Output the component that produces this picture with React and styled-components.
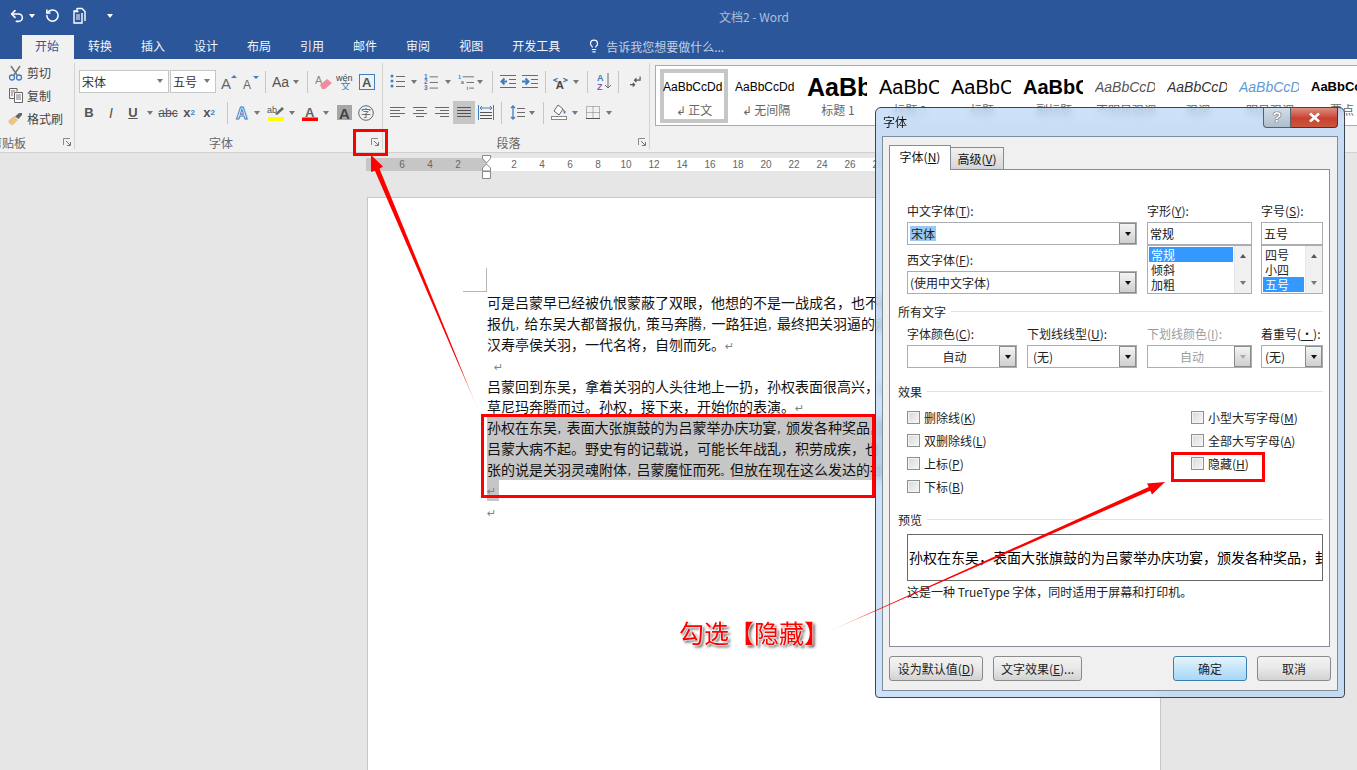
import React from "react";
import styled, { createGlobalStyle } from "styled-components";
import { Undo2, RotateCcw, Lightbulb } from "lucide-react";

const UI = `"Noto Sans CJK SC", "Liberation Sans", sans-serif`;
const LATIN = `"Liberation Sans", "Noto Sans CJK SC", sans-serif`;
const GRAY = "#6a6a6a";
const BLUE = "#3f7fbf";

const Global = createGlobalStyle`
  html, body { margin: 0; padding: 0; overflow: hidden; }
  body { font-family: ${UI}; font-size: 12px; color: #111; }
  * { box-sizing: border-box; }
`;

const Shell = styled.div`
  position: relative;
  width: 1357px;
  height: 770px;
  overflow: hidden;
  display: flex;
  flex-direction: column;
  background: #e6e6e6;
`;

/* title bar and tabs */
const TitleBar = styled.div`
  height: 33px;
  background: #2b579a;
  display: flex;
  align-items: center;
  color: #fff;
`;
const Quick = styled.div`
  width: 719px;
  display: flex;
  align-items: center;
  padding: 0 0 2px 9px;
`;
const QuickGap = styled.span`
  display: inline-flex;
  margin-left: ${(p) => p.$ml || 0}px;
`;
const DocTitle = styled.div`
  font-size: 12px;
  color: #aebfd9;
  white-space: nowrap;
`;
const TabBar = styled.div`
  height: 26px;
  background: #2b579a;
  display: flex;
  align-items: flex-end;
  padding-left: 22px;
`;
const Tab = styled.div`
  height: 24px;
  padding: 0 15px 0 13px;
  margin-right: 1px;
  line-height: 22px;
  font-size: 12px;
  color: ${(p) => (p.$on ? "#2b579a" : "#f2f5fa")};
  background: ${(p) => (p.$on ? "#f1f1f1" : "transparent")};
`;
const TellMe = styled.div`
  height: 24px;
  margin-left: 11px;
  padding-bottom: 2px;
  display: flex;
  align-items: center;
  gap: 5px;
  color: #c3cfe3;
  font-size: 12px;
  svg { color: #fff; }
`;

/* ribbon */
const Ribbon = styled.div`
  height: 94px;
  background: #f1f1f1;
  border-bottom: 1px solid #d0d0d0;
  display: flex;
  overflow: hidden;
`;
const Group = styled.div`
  width: ${(p) => p.$w}px;
  flex: none;
  display: flex;
  flex-direction: column;
  padding-top: 11px;
  position: relative;
  &::after {
    content: "";
    position: absolute;
    right: 0;
    top: 4px;
    bottom: 3px;
    width: 1px;
    background: #d4d4d4;
  }
`;
const Row = styled.div`
  display: flex;
  align-items: center;
  height: 23px;
  margin-bottom: 8px;
  padding-left: ${(p) => p.$pl || 0}px;
`;
const GroupFoot = styled.div`
  margin-top: auto;
  margin-bottom: 1px;
  height: 18px;
  display: flex;
  align-items: center;
  color: #666;
  font-size: 12px;
`;
const GroupName = styled.div`
  flex: 1;
  text-align: center;
`;
const ClippedName = styled.div`
  flex: 1;
  margin-left: -10px;
  white-space: nowrap;
`;
const Launcher = styled.div`
  width: 16px;
  display: flex;
  justify-content: center;
`;
const ClipRows = styled.div`
  height: 69px;
  margin-top: -9px;
  display: flex;
  flex-direction: column;
`;
const ClipItem = styled.div`
  height: 23px;
  display: flex;
  align-items: center;
  color: #444;
  font-size: 12px;
`;
const ClipIcon = styled.span`
  width: 27px;
  display: flex;
  justify-content: center;
  padding-left: 4px;
`;
const Select = styled.div`
  width: ${(p) => p.$w}px;
  height: 23px;
  margin-left: ${(p) => p.$ml || 0}px;
  border: 1px solid #c6c6c6;
  background: #fff;
  display: flex;
  align-items: center;
  justify-content: space-between;
  padding: 0 5px 1px 2px;
  color: #333;
  font-size: 12px;
`;
const Tool = styled.span`
  width: ${(p) => p.$w}px;
  height: ${(p) => (p.$on ? 23 : 20)}px;
  margin-left: ${(p) => p.$ml || 0}px;
  flex: none;
  display: flex;
  align-items: center;
  justify-content: center;
  background: ${(p) => (p.$on ? "#c6c6c6" : "transparent")};
  color: ${(p) => p.$c || "#555"};
  font-family: ${LATIN};
  font-size: ${(p) => p.$fs || 13}px;
  font-weight: ${(p) => p.$fw || 400};
  font-style: ${(p) => p.$it || "normal"};
  white-space: nowrap;
`;
const Caret = styled.i`
  display: block;
  width: 0;
  height: 0;
  border-left: 3.5px solid transparent;
  border-right: 3.5px solid transparent;
  border-top: 4px solid ${(p) => p.$c || "#777"};
`;
const Sep = styled.i`
  display: block;
  flex: none;
  width: 1px;
  height: 22px;
  margin-left: ${(p) => p.$ml || 0}px;
  background: #c6c6c6;
`;
const Gallery = styled.div`
  flex: 1;
  height: 61px;
  margin: 6px 0 0 5px;
  background: #fff;
  border: 1px solid #ababab;
  border-right: 0;
  padding: 3px 0 0 4px;
  display: flex;
  overflow: hidden;
`;
const StyleItem = styled.div`
  width: 68px;
  height: 54px;
  margin-right: 4px;
  flex: none;
  border: 4px solid ${(p) => (p.$on ? "#c6c6c6" : "transparent")};
  display: flex;
  flex-direction: column;
  align-items: center;
`;
const StylePreview = styled.div`
  width: 60px;
  height: 30px;
  margin-left: -2px;
  overflow: hidden;
  white-space: nowrap;
  line-height: 28px;
  font-family: ${LATIN};
  font-size: ${(p) => p.$fs || 12}px;
  font-weight: ${(p) => (p.$b ? 700 : 400)};
  font-style: ${(p) => (p.$i ? "italic" : "normal")};
  color: ${(p) => p.$c || "#000"};
`;
const StyleLabel = styled.div`
  font-size: 12px;
  line-height: 18px;
  color: #666;
  white-space: nowrap;
`;

/* ruler and page */
const Workspace = styled.div`
  flex: 1;
  overflow: hidden;
`;
const Ruler = styled.div`
  position: relative;
  display: flex;
  width: 794px;
  height: 13px;
  margin: 5px 0 26px 366px;
  font-family: ${LATIN};
  font-size: 10px;
  line-height: 13px;
  color: #666;
`;
const RulerLeft = styled.div`
  width: 121px;
  display: flex;
  justify-content: flex-end;
  padding-right: 15px;
  background: #c6c6c6;
`;
const RulerRight = styled.div`
  flex: 1;
  display: flex;
  padding-left: 13px;
  background: #fff;
`;
const Tick = styled.span`
  width: 28px;
  text-align: center;
`;
const IndentMark = styled.svg`
  position: absolute;
  left: 116px;
  top: -3px;
`;
const Sheet = styled.div`
  width: 794px;
  height: 600px;
  margin-left: 367px;
  background: #fff;
  border: 1px solid #c6c6c6;
  padding: 70px 0 0 119px;
`;
const CropMark = styled.div`
  width: 24px;
  height: 24px;
  margin-left: -24px;
  border-right: 1px solid #b5b5b5;
  border-bottom: 1px solid #b5b5b5;
`;
const Line = styled.div`
  height: 20.9px;
  line-height: 20.9px;
  font-size: 14px;
  color: #111;
  white-space: nowrap;
  overflow: hidden;
  width: 672px;
`;
const SelLine = styled(Line)`
  background: #c6c6c6;
`;
const NarrowMark = styled.span`
  font-size: 9.5px;
`;
const Mark = styled.span`
  font-family: "DejaVu Sans", sans-serif;
  font-size: 11px;
  color: #808080;
  margin-left: ${(p) => p.$ml || 0}px;
`;
const SelMark = styled.div`
  width: 12px;
  height: 20.9px;
  line-height: 20.9px;
  background: #c6c6c6;
`;

/* font dialog */
const Dialog = styled.div`
  position: absolute;
  left: 875px;
  top: 107px;
  width: 470px;
  height: 591px;
  border: 1px solid #3d4650;
  border-radius: 6px 6px 4px 4px;
  padding: 0 6px 6px;
  display: flex;
  flex-direction: column;
  background: rgba(186, 215, 245, 0.72);
  backdrop-filter: blur(4px);
`;
const DialogTitle = styled.div`
  height: 28px;
  flex: none;
  display: flex;
  justify-content: space-between;
  padding-left: 1px;
  line-height: 27px;
  font-size: 12px;
  color: #111;
`;
const WinButtons = styled.div`
  display: flex;
  height: 20px;
`;
const HelpBtn = styled.div`
  width: 28px;
  border: 1px solid #56616e;
  border-top: 0;
  border-radius: 0 0 0 4px;
  background: linear-gradient(#d3dde8, #aebccb);
  color: #fff;
  font: 700 15px/18px ${LATIN};
  text-align: center;
  text-shadow: 0 0 1px #222, 0 0 1px #222;
`;
const CloseBtn = styled.div`
  width: 47px;
  border: 1px solid #5a2a25;
  border-top: 0;
  border-left: 0;
  border-radius: 0 0 4px 0;
  background: linear-gradient(#dc8f80, #c8412e 55%, #c9583f);
  display: flex;
  align-items: center;
  justify-content: center;
`;
const DialogBody = styled.div`
  flex: 1;
  background: #f0f0f0;
  border: 1px solid #7f8c9a;
  padding: 8px 6px 0;
  display: flex;
  flex-direction: column;
`;
const Tabs = styled.div`
  display: flex;
  align-items: flex-end;
  height: 25px;
  margin-bottom: -1px;
`;
const DlgTab = styled.div`
  position: relative;
  width: ${(p) => p.$w}px;
  height: ${(p) => (p.$on ? 25 : 23)}px;
  border: 1px solid #898c95;
  border-left-width: ${(p) => (p.$on ? 1 : 0)}px;
  border-bottom: ${(p) => (p.$on ? 0 : 1)}px solid #898c95;
  background: ${(p) => (p.$on ? "#fff" : "linear-gradient(#f2f2f2, #d5d5d5)")};
  text-align: center;
  line-height: 22px;
  z-index: 1;
`;
const Panel = styled.div`
  width: 441px;
  height: 478px;
  flex: none;
  background: #fff;
  border: 1px solid #898c95;
  padding: 33px 6px 0 8px;
`;
const Fields = styled.div`
  display: flex;
  margin-left: 9px;
  margin-top: ${(p) => p.$mt || 0}px;
`;
const Col = styled.div`
  width: ${(p) => p.$w}px;
  margin-left: ${(p) => p.$ml || 0}px;
  flex: none;
`;
const Label = styled.div`
  height: 16px;
  line-height: 16px;
  margin: ${(p) => p.$mt || 0}px 0 3px;
  white-space: nowrap;
  color: ${(p) => (p.$off ? "#9c9c9c" : "#222")};
`;
const Combo = styled.div`
  height: 23px;
  border: 1px solid #abadb3;
  background: #fff;
  display: flex;
  align-items: center;
  padding-left: 2px;
  white-space: nowrap;
`;
const ComboText = styled.div`
  flex: 1;
  text-align: ${(p) => (p.$center ? "center" : "left")};
  color: ${(p) => (p.$off ? "#9c9c9c" : "#222")};
  padding-left: ${(p) => p.$pl || 0}px;
`;
const ComboBtn = styled.div`
  width: 17px;
  height: 100%;
  border: 1px solid #8b8b8b;
  background: linear-gradient(#f4f4f4, #cfcfcf);
  display: flex;
  align-items: center;
  justify-content: center;
`;
const Picked = styled.span`
  background: #99c9f5;
  padding: 0 1px;
  line-height: 15px;
  display: inline-block;
`;
const ListBox = styled.div`
  height: 49px;
  border: 1px solid #abadb3;
  background: #fff;
  display: flex;
`;
const ListItems = styled.div`
  flex: 1;
  padding: 1px;
`;
const ListItem = styled.div`
  height: 15px;
  line-height: 15px;
  padding-left: 2px;
  color: ${(p) => (p.$on ? "#fff" : "#222")};
  background: ${(p) => (p.$on ? "#3399ff" : "transparent")};
`;
const ScrollBar = styled.div`
  width: 17px;
  background: #f0f0f0;
  border-left: 1px solid #e6e6e6;
  display: flex;
  flex-direction: column;
  align-items: center;
  justify-content: space-between;
  padding: 8px 0 8px;
`;
const UpCaret = styled.i`
  display: block;
  width: 0;
  height: 0;
  border-left: 3.5px solid transparent;
  border-right: 3.5px solid transparent;
  border-bottom: 4px solid #555;
`;
const Head = styled.div`
  display: flex;
  align-items: center;
  gap: 5px;
  height: 16px;
  margin-top: ${(p) => p.$mt}px;
  color: #222;
  &::after {
    content: "";
    flex: 1;
    height: 1px;
    background: #dde3ea;
  }
`;
const Checks = styled.div`
  display: grid;
  grid-template-columns: 284px 1fr;
  grid-template-rows: repeat(4, 23px);
  grid-auto-flow: column;
  margin: 7px 0 0 9px;
`;
const CheckRow = styled.label`
  display: flex;
  align-items: center;
  gap: 4px;
  color: #222;
`;
const CheckText = styled.span`
  white-space: nowrap;
`;
const CheckBox = styled.i`
  display: block;
  width: 13px;
  height: 13px;
  border: 1px solid #8e8f8f;
  background: linear-gradient(135deg, #d9d9d9, #f6f6f6);
  box-shadow: inset 0 0 0 1px #f4f4f4;
`;
const Preview = styled.div`
  height: 47px;
  margin: 7px 0 0 9px;
  border: 1px solid #696969;
  padding-left: 1px;
  line-height: 45px;
  font-size: 14px;
  color: #000;
  white-space: nowrap;
  overflow: hidden;
`;
const Note = styled.div`
  height: 16px;
  line-height: 16px;
  margin: 3px 0 0 9px;
  color: #222;
  white-space: nowrap;
`;
const ButtonRow = styled.div`
  display: flex;
  justify-content: space-between;
  margin-top: 9px;
`;
const ButtonGroup = styled.div`
  display: flex;
  gap: ${(p) => p.$gap}px;
`;
const DlgButton = styled.div`
  width: ${(p) => p.$w}px;
  height: 25px;
  border: 1px solid ${(p) => (p.$primary ? "#3c7fb1" : "#8a8a8a")};
  border-radius: 3px;
  background: ${(p) =>
    p.$primary
      ? "linear-gradient(#e8f5fd, #c4e5f9 50%, #a6d7f7)"
      : "linear-gradient(#f4f4f4, #e8e8e8 50%, #d2d2d2)"};
  text-align: center;
  line-height: 23px;
  color: #222;
  white-space: nowrap;
`;

/* red annotations */
const Callout = styled.div`
  position: absolute;
  left: ${(p) => p.$x}px;
  top: ${(p) => p.$y}px;
  width: ${(p) => p.$w}px;
  height: ${(p) => p.$h}px;
  border: 3px solid #fe0000;
`;
const Arrows = styled.svg`
  position: absolute;
  left: 0;
  top: 0;
  pointer-events: none;
`;
const Hint = styled.div`
  position: absolute;
  left: 679px;
  top: 614px;
  font-size: 25px;
  line-height: 36px;
  color: #fe0000;
  white-space: nowrap;
  text-shadow: 0 0 2px #fff, 0 0 2px #fff, 0 0 2px #fff, 2px 2px 3px rgba(0, 0, 0, 0.8);
`;

/* icons */
const Svg = ({ w = 16, h = 16, children }) => (
  <svg width={w} height={h} viewBox={`0 0 ${w} ${h}`} fill="none">
    {children}
  </svg>
);

const Bars = ({ w = 15, h = 13, rows, c = GRAY }) => (
  <Svg w={w} h={h}>
    {rows.map(([x1, x2, y], i) => (
      <path key={i} d={`M${x1} ${y}.5H${x2}`} stroke={c} />
    ))}
  </Svg>
);

const LaunchIcon = () => (
  <Svg w={8} h={8}>
    <path d="M.5 7V.5H7" stroke="#8a8a8a" />
    <path d="M3 3l4 4M7.5 4v3.5H4" stroke="#777" />
  </Svg>
);

const PasteDoc = () => (
  <Svg w={14} h={17}>
    <path d="M4 1.5h5l3 3V14M1.5 4.5h4M4 1v3H1v12h8V6" stroke="#fff" strokeWidth="1.4" />
    <path d="M3 8h4M3 10h4M3 12h4" stroke="#fff" />
  </Svg>
);

const Scissors = () => (
  <Svg w={15} h={16}>
    <path d="M3 1l6 9M12 1L6 10" stroke="#777" strokeWidth="1.5" />
    <circle cx="4" cy="12.5" r="2.5" stroke="#3f7fbf" strokeWidth="1.3" />
    <circle cx="11" cy="12.5" r="2.5" stroke="#3f7fbf" strokeWidth="1.3" />
  </Svg>
);

const CopyIcon = () => (
  <Svg w={14} h={15}>
    <path d="M8 3.5V.5H.5v10H5" stroke="#666" />
    <path d="M5.5 4.5h8v10h-8z" fill="#fff" stroke="#666" />
    <path d="M7 7h5M7 9h5M7 11h5M2 3h4M2 5h2M2 7h2" stroke="#777" />
  </Svg>
);

const BrushIcon = () => (
  <Svg w={17} h={14}>
    <path d="M1 9l6-5 4 4-5 5c-2 1-4-2-5-4z" fill="#eec388" />
    <path d="M8 4.5L12 1l3 0v2l-3.5 4z" fill="#666" />
  </Svg>
);

const GrowIcon = ({ down }) => (
  <Svg w={18} h={16}>
    <text x="1" y="15" fontSize={down ? 12 : 15} fontFamily="Liberation Sans" fill="#666">A</text>
    <path d={down ? "M11 2h6l-3 3z" : "M14 1l3 3h-6z"} fill={BLUE} />
  </Svg>
);

const EraserIcon = () => (
  <Svg w={18} h={16}>
    <text x="0" y="10" fontSize="11" fontFamily="Liberation Sans" fill="#888">A</text>
    <path d="M5 11l7-6 5 4-7 6H7z" fill="#ee8d9f" />
  </Svg>
);

const PhoneticIcon = () => (
  <Svg w={19} h={17}>
    <text x="0" y="7.5" fontSize="9" fontFamily="Liberation Sans" fill="#444">wén</text>
    <text x="4.5" y="17" fontSize="10" fontFamily="Noto Sans CJK SC" fill={BLUE}>文</text>
  </Svg>
);

const BoxA = () => (
  <Svg w={17} h={16}>
    <rect x=".5" y=".5" width="15" height="15" stroke={BLUE} />
    <text x="3" y="13" fontSize="13" fontWeight="700" fontFamily="Liberation Sans" fill="#555">A</text>
  </Svg>
);

const GlowA = () => (
  <Svg w={16} h={16}>
    <text x="1" y="14" fontSize="16" fontWeight="700" fontFamily="Liberation Sans" fill="#fff" stroke={BLUE} strokeWidth="1">A</text>
  </Svg>
);

const MarkerIcon = () => (
  <Svg w={18} h={16}>
    <text x="0" y="8" fontSize="9" fontFamily="Liberation Sans" fill="#555">ab</text>
    <path d="M8 9l7-7 2 2-7 6z" fill="#666" />
    <rect x="1" y="12" width="16" height="4" fill="#ffff00" />
  </Svg>
);

const ColorA = () => (
  <Svg w={16} h={16}>
    <text x="3" y="12" fontSize="13" fontWeight="700" fontFamily="Liberation Sans" fill="#666">A</text>
    <rect y="12.5" width="16" height="3.5" fill="#fe0000" />
  </Svg>
);

const ShadeA = () => (
  <Svg w={15} h={15}>
    <rect width="15" height="15" fill="#a6a6a6" />
    <text x="2" y="13.5" fontSize="15" fontWeight="700" fontFamily="Liberation Sans" fill="#444">A</text>
  </Svg>
);

const CircleZi = () => (
  <Svg w={16} h={16}>
    <circle cx="8" cy="8" r="7.3" stroke="#666" />
    <text x="3" y="12" fontSize="10" fontFamily="Noto Sans CJK SC" fill="#555">字</text>
  </Svg>
);

const BulletList = () => (
  <Svg w={15} h={15}>
    {[2, 7, 12].map((y) => (
      <g key={y}>
        <circle cx="2" cy={y} r="1.5" fill={BLUE} />
        <path d={`M6 ${y}.5H15`} stroke={GRAY} />
      </g>
    ))}
  </Svg>
);

const NumberList = () => (
  <Svg w={15} h={16}>
    {[2, 8, 14].map((y, i) => (
      <g key={y}>
        <text x="0" y={y + 2.5} fontSize="7" fontWeight="700" fontFamily="Liberation Sans" fill={BLUE}>{i + 1}</text>
        <path d={`M6 ${y}.5H15`} stroke={GRAY} />
      </g>
    ))}
  </Svg>
);

const MultiList = () => (
  <Svg w={17} h={16}>
    <text x="0" y="5" fontSize="6" fontWeight="700" fontFamily="Liberation Sans" fill={BLUE}>1</text>
    <text x="3" y="10.5" fontSize="6" fontWeight="700" fontFamily="Liberation Sans" fill={BLUE}>a</text>
    <text x="9" y="16" fontSize="6" fontWeight="700" fontFamily="Liberation Sans" fill={BLUE}>i</text>
    <path d="M5 2.5H17M9 8.5H17M12 14.5H17" stroke={GRAY} />
  </Svg>
);

const IndentIcon = ({ out }) => (
  <Svg w={16} h={13}>
    <path d="M0 .5H16M0 12.5H16M9 4.5H16M9 8.5H16" stroke={GRAY} />
    <path d={out ? "M7 6.5H2M4.5 3.5L1.5 6.5l3 3" : "M0 6.5H6M3.5 3.5L6.5 6.5l-3 3"} stroke={BLUE} strokeWidth="2" />
  </Svg>
);

const LayoutIcon = () => (
  <Svg w={16} h={14}>
    <path d="M5 3L1 5l4 2M11 3l4 2-4 2" stroke={BLUE} strokeWidth="1.4" />
    <text x="3" y="14" fontSize="12" fontWeight="700" fontFamily="Liberation Sans" fill="#444">A</text>
  </Svg>
);

const SortIcon = () => (
  <Svg w={15} h={17}>
    <text x="0" y="8" fontSize="9" fontWeight="700" fontFamily="Liberation Sans" fill={BLUE}>A</text>
    <text x="0" y="17" fontSize="9" fontWeight="700" fontFamily="Liberation Sans" fill="#8b5fa8">Z</text>
    <path d="M11 0v15M8 12l3 3 3-3" stroke={GRAY} />
  </Svg>
);

const ReturnIcon = () => (
  <Svg w={12} h={13}>
    <path d="M11 1v4H5M7 3L5 5l2 2" stroke="#555" strokeWidth="1.3" />
    <path d="M0 10h5M3 8l2 2-2 2" stroke="#555" strokeWidth="1.3" />
  </Svg>
);

const DistIcon = () => (
  <Svg w={16} h={15}>
    <path d="M.5 0v15M15.5 0v15" stroke={BLUE} />
    <path d="M2 3h12M4 1L2 3l2 2M12 1l2 2-2 2" stroke={BLUE} />
    <path d="M2 7.5h12M2 10.5h12M2 13.5h12" stroke="#555" />
  </Svg>
);

const SpacingIcon = () => (
  <Svg w={15} h={15}>
    <path d="M3 1v13M1 3l2-2 2 2M1 12l2 2 2-2" stroke={BLUE} strokeWidth="1.3" />
    <path d="M7 3.5H15M7 7.5H15M7 11.5H15" stroke={GRAY} />
  </Svg>
);

const BucketIcon = () => (
  <Svg w={17} h={17}>
    <path d="M7 1l-4 6 5 4 4-6z" fill="#fff" stroke="#666" />
    <path d="M12 5l3 3-2 2z" fill={BLUE} />
    <rect x=".5" y="12.5" width="15" height="3" fill="#fff" stroke="#888" />
  </Svg>
);

const BorderIcon = () => (
  <Svg w={14} h={13}>
    <path d="M.5 .5h13v12H.5zM7 .5v12M.5 6.5h13" stroke="#777" strokeDasharray="1 1" />
    <path d="M0 12.5h14" stroke="#555" />
  </Svg>
);

// these lines have squeezed punctuation in the reference
const Tight = ({ text }) =>
  text.split(/([，。])/).map((part, i) =>
    part === "，" || part === "。" ? <NarrowMark key={i}>{part}</NarrowMark> : part
  );

const tickLeft = [6, 4, 2];
const tickRight = [2, 4, 6, 8, 10, 12, 14, 16, 18, 20, 22, 24, 26, 28];

const App = () => (
  <Shell>
    <Global />
    <TitleBar>
      <Quick>
        <Undo2 size={16} strokeWidth={2.4} />
        <QuickGap $ml={4}><Caret $c="#fff" /></QuickGap>
        <QuickGap $ml={10}><RotateCcw size={15} strokeWidth={2.4} /></QuickGap>
        <QuickGap $ml={13}><PasteDoc /></QuickGap>
        <QuickGap $ml={20}><Caret $c="#fff" /></QuickGap>
      </Quick>
      <DocTitle>文档2 - Word</DocTitle>
    </TitleBar>
    <TabBar>
      <Tab $on>开始</Tab>
      {["转换", "插入", "设计", "布局", "引用", "邮件", "审阅", "视图", "开发工具"].map((t) => (
        <Tab key={t}>{t}</Tab>
      ))}
      <TellMe>
        <Lightbulb size={14} />
        告诉我您想要做什么...
      </TellMe>
    </TabBar>

    <Ribbon>
      <Group $w={75}>
        <ClipRows>
          <ClipItem><ClipIcon><Scissors /></ClipIcon>剪切</ClipItem>
          <ClipItem><ClipIcon><CopyIcon /></ClipIcon>复制</ClipItem>
          <ClipItem><ClipIcon><BrushIcon /></ClipIcon>格式刷</ClipItem>
        </ClipRows>
        <GroupFoot>
          <ClippedName>剪贴板</ClippedName>
          <Launcher><LaunchIcon /></Launcher>
        </GroupFoot>
      </Group>

      <Group $w={308}>
        <Row $pl={4}>
          <Select $w={90}>宋体<Caret /></Select>
          <Select $w={46} $ml={1}>五号<Caret /></Select>
          <Tool $w={18} $ml={4}><GrowIcon /></Tool>
          <Tool $w={18} $ml={4}><GrowIcon down /></Tool>
          <Sep $ml={5} />
          <Tool $w={21} $ml={4} $fs={14}>Aa</Tool>
          <Tool $w={10}><Caret /></Tool>
          <Sep $ml={6} />
          <Tool $w={18} $ml={7}><EraserIcon /></Tool>
          <Tool $w={19} $ml={3}><PhoneticIcon /></Tool>
          <Tool $w={18} $ml={3}><BoxA /></Tool>
        </Row>
        <Row $pl={4}>
          <Tool $w={20} $fw={700}>B</Tool>
          <Tool $w={20} $ml={2} $it="italic" $fs={14}>I</Tool>
          <Tool $w={20} $ml={2} $fw={700}><u>U</u></Tool>
          <Tool $w={12} $ml={1}><Caret /></Tool>
          <Tool $w={24} $fs={12}><s>abc</s></Tool>
          <Tool $w={18} $fw={700}>x<sub style={{ fontSize: 8, color: BLUE }}>2</sub></Tool>
          <Tool $w={18} $ml={2} $fw={700}>x<sup style={{ fontSize: 8, color: BLUE }}>2</sup></Tool>
          <Sep $ml={9} />
          <Tool $w={20} $ml={5}><GlowA /></Tool>
          <Tool $w={8}><Caret /></Tool>
          <Tool $w={18} $ml={6}><MarkerIcon /></Tool>
          <Tool $w={12} $ml={1}><Caret /></Tool>
          <Tool $w={16} $ml={4}><ColorA /></Tool>
          <Tool $w={10} $ml={3}><Caret /></Tool>
          <Tool $w={16} $ml={5}><ShadeA /></Tool>
          <Tool $w={16} $ml={6}><CircleZi /></Tool>
        </Row>
        <GroupFoot>
          <GroupName>字体</GroupName>
          <Launcher><LaunchIcon /></Launcher>
        </GroupFoot>
      </Group>

      <Group $w={267}>
        <Row $pl={7}>
          <Tool $w={15}><BulletList /></Tool>
          <Tool $w={10} $ml={4}><Caret /></Tool>
          <Tool $w={14} $ml={5}><NumberList /></Tool>
          <Tool $w={10} $ml={5}><Caret /></Tool>
          <Tool $w={16} $ml={5}><MultiList /></Tool>
          <Tool $w={10} $ml={1}><Caret /></Tool>
          <Sep $ml={7} />
          <Tool $w={16} $ml={7}><IndentIcon out /></Tool>
          <Tool $w={16} $ml={6}><IndentIcon /></Tool>
          <Sep $ml={7} />
          <Tool $w={15} $ml={7}><LayoutIcon /></Tool>
          <Tool $w={10} $ml={3}><Caret /></Tool>
          <Sep $ml={6} />
          <Tool $w={15} $ml={9}><SortIcon /></Tool>
          <Sep $ml={6} />
          <Tool $w={11} $ml={11}><ReturnIcon /></Tool>
        </Row>
        <Row $pl={7}>
          <Tool $w={15}><Bars h={11} rows={[[0, 15, 0], [0, 10, 3], [0, 15, 6], [0, 10, 9]]} /></Tool>
          <Tool $w={14} $ml={8}><Bars w={14} h={11} rows={[[0, 14, 0], [3, 11, 3], [0, 14, 6], [3, 11, 9]]} /></Tool>
          <Tool $w={14} $ml={8}><Bars w={14} h={11} rows={[[0, 14, 0], [5, 14, 3], [0, 14, 6], [5, 14, 9]]} /></Tool>
          <Tool $w={22} $ml={4} $on><Bars w={14} h={11} rows={[[0, 14, 0], [0, 14, 3], [0, 14, 6], [0, 14, 9]]} c="#555" /></Tool>
          <Tool $w={16} $ml={3}><DistIcon /></Tool>
          <Sep $ml={7} />
          <Tool $w={15} $ml={8}><SpacingIcon /></Tool>
          <Tool $w={10} $ml={2}><Caret /></Tool>
          <Sep $ml={6} />
          <Tool $w={17} $ml={7}><BucketIcon /></Tool>
          <Tool $w={10} $ml={2}><Caret /></Tool>
          <Tool $w={14} $ml={6}><BorderIcon /></Tool>
          <Tool $w={10} $ml={4}><Caret /></Tool>
        </Row>
        <GroupFoot>
          <GroupName>段落</GroupName>
          <Launcher><LaunchIcon /></Launcher>
        </GroupFoot>
      </Group>

      <Gallery>
        <StyleItem $on>
          <StylePreview>AaBbCcDd</StylePreview>
          <StyleLabel>↲ 正文</StyleLabel>
        </StyleItem>
        <StyleItem>
          <StylePreview>AaBbCcDd</StylePreview>
          <StyleLabel>↲ 无间隔</StyleLabel>
        </StyleItem>
        <StyleItem>
          <StylePreview $fs={25} $b>AaBb</StylePreview>
          <StyleLabel>标题 1</StyleLabel>
        </StyleItem>
        <StyleItem>
          <StylePreview $fs={20}>AaBbC</StylePreview>
          <StyleLabel>标题 2</StyleLabel>
        </StyleItem>
        <StyleItem>
          <StylePreview $fs={20}>AaBbC</StylePreview>
          <StyleLabel>标题</StyleLabel>
        </StyleItem>
        <StyleItem>
          <StylePreview $fs={20} $b>AaBbC</StylePreview>
          <StyleLabel>副标题</StyleLabel>
        </StyleItem>
        <StyleItem>
          <StylePreview $i $fs={14} $c="#555">AaBbCcDd</StylePreview>
          <StyleLabel>不明显强调</StyleLabel>
        </StyleItem>
        <StyleItem>
          <StylePreview $i $fs={14} $c="#333">AaBbCcDd</StylePreview>
          <StyleLabel>强调</StyleLabel>
        </StyleItem>
        <StyleItem>
          <StylePreview $i $fs={14} $c="#5b9bd5">AaBbCcDd</StylePreview>
          <StyleLabel>明显强调</StyleLabel>
        </StyleItem>
        <StyleItem>
          <StylePreview $b $fs={13}>AaBbCcDd</StylePreview>
          <StyleLabel>要点</StyleLabel>
        </StyleItem>
      </Gallery>
    </Ribbon>

    <Workspace>
      <Ruler>
        <RulerLeft>
          {tickLeft.map((n) => <Tick key={n}>{n}</Tick>)}
        </RulerLeft>
        <RulerRight>
          {tickRight.map((n) => <Tick key={n}>{n}</Tick>)}
        </RulerRight>
        <IndentMark width="10" height="25" viewBox="0 0 10 25">
          <path d="M.5.5h8v3L4.5 8 .5 3.5zM4.5 9l4 4v3h-8v-3z" fill="#fff" stroke="#888" />
          <path d="M.5 16.5h8v7h-8z" fill="#fff" stroke="#888" />
        </IndentMark>
      </Ruler>
      <Sheet>
        <CropMark />
        <Line>可是吕蒙早已经被仇恨蒙蔽了双眼，他想的不是一战成名，也不是</Line>
        <Line><Tight text="报仇，给东吴大都督报仇，策马奔腾，一路狂追，最终把关羽逼的走" /></Line>
        <Line>汉寿亭侯关羽，一代名将，自刎而死。<Mark>↵</Mark></Line>
        <Line><Mark $ml={7}>↵</Mark></Line>
        <Line>吕蒙回到东吴，拿着关羽的人头往地上一扔，孙权表面很高兴，心</Line>
        <Line>草尼玛奔腾而过。孙权，接下来，开始你的表演。<Mark>↵</Mark></Line>
        <SelLine><Tight text="孙权在东吴，表面大张旗鼓的为吕蒙举办庆功宴，颁发各种奖品，封" /></SelLine>
        <SelLine>吕蒙大病不起。野史有的记载说，可能长年战乱，积劳成疾，也</SelLine>
        <SelLine><Tight text="张的说是关羽灵魂附体，吕蒙魔怔而死。但放在现在这么发达的社会" /></SelLine>
        <SelMark><Mark>↵</Mark></SelMark>
        <Line><Mark>↵</Mark></Line>
      </Sheet>
    </Workspace>

    <Dialog>
      <DialogTitle>
        字体
        <WinButtons>
          <HelpBtn>?</HelpBtn>
          <CloseBtn>
            <Svg w={13} h={11}>
              <path d="M2 1.5l9 8M11 1.5l-9 8" stroke="#fff" strokeWidth="2.6" />
            </Svg>
          </CloseBtn>
        </WinButtons>
      </DialogTitle>
      <DialogBody>
        <Tabs>
          <DlgTab $w={62} $on>字体(<u>N</u>)</DlgTab>
          <DlgTab $w={53}>高级(<u>V</u>)</DlgTab>
        </Tabs>
        <Panel>
          <Fields>
            <Col $w={230}>
              <Label>中文字体(<u>T</u>):</Label>
              <Combo>
                <ComboText><Picked>宋体</Picked></ComboText>
                <ComboBtn><Caret $c="#111" /></ComboBtn>
              </Combo>
              <Label $mt={7}>西文字体(<u>F</u>):</Label>
              <Combo>
                <ComboText>(使用中文字体)</ComboText>
                <ComboBtn><Caret $c="#111" /></ComboBtn>
              </Combo>
            </Col>
            <Col $w={105} $ml={10}>
              <Label>字形(<u>Y</u>):</Label>
              <Combo>常规</Combo>
              <ListBox>
                <ListItems>
                  <ListItem $on>常规</ListItem>
                  <ListItem>倾斜</ListItem>
                  <ListItem>加粗</ListItem>
                </ListItems>
                <ScrollBar><UpCaret /><Caret /></ScrollBar>
              </ListBox>
            </Col>
            <Col $w={62} $ml={9}>
              <Label>字号(<u>S</u>):</Label>
              <Combo>五号</Combo>
              <ListBox>
                <ListItems>
                  <ListItem>四号</ListItem>
                  <ListItem>小四</ListItem>
                  <ListItem $on>五号</ListItem>
                </ListItems>
                <ScrollBar><UpCaret /><Caret /></ScrollBar>
              </ListBox>
            </Col>
          </Fields>

          <Head $mt={9}>所有文字</Head>
          <Fields $mt={7}>
            <Col $w={110}>
              <Label>字体颜色(<u>C</u>):</Label>
              <Combo>
                <ComboText $center>自动</ComboText>
                <ComboBtn><Caret $c="#111" /></ComboBtn>
              </Combo>
            </Col>
            <Col $w={110} $ml={10}>
              <Label>下划线线型(<u>U</u>):</Label>
              <Combo>
                <ComboText $pl={3}>(无)</ComboText>
                <ComboBtn><Caret $c="#111" /></ComboBtn>
              </Combo>
            </Col>
            <Col $w={105} $ml={10}>
              <Label $off>下划线颜色(<u>I</u>):</Label>
              <Combo>
                <ComboText $center $off>自动</ComboText>
                <ComboBtn><Caret $c="#aaa" /></ComboBtn>
              </Combo>
            </Col>
            <Col $w={62} $ml={9}>
              <Label>着重号(<u>·</u>):</Label>
              <Combo>
                <ComboText $pl={1}>(无)</ComboText>
                <ComboBtn><Caret $c="#111" /></ComboBtn>
              </Combo>
            </Col>
          </Fields>

          <Head $mt={15}>效果</Head>
          <Checks>
            <CheckRow><CheckBox /><CheckText>删除线(<u>K</u>)</CheckText></CheckRow>
            <CheckRow><CheckBox /><CheckText>双删除线(<u>L</u>)</CheckText></CheckRow>
            <CheckRow><CheckBox /><CheckText>上标(<u>P</u>)</CheckText></CheckRow>
            <CheckRow><CheckBox /><CheckText>下标(<u>B</u>)</CheckText></CheckRow>
            <CheckRow><CheckBox /><CheckText>小型大写字母(<u>M</u>)</CheckText></CheckRow>
            <CheckRow><CheckBox /><CheckText>全部大写字母(<u>A</u>)</CheckText></CheckRow>
            <CheckRow><CheckBox /><CheckText>隐藏(<u>H</u>)</CheckText></CheckRow>
          </Checks>

          <Head $mt={13}>预览</Head>
          <Preview>孙权在东吴，表面大张旗鼓的为吕蒙举办庆功宴，颁发各种奖品，封</Preview>
          <Note>这是一种 TrueType 字体，同时适用于屏幕和打印机。</Note>
        </Panel>
        <ButtonRow>
          <ButtonGroup $gap={10}>
            <DlgButton $w={94}>设为默认值(<u>D</u>)</DlgButton>
            <DlgButton $w={89}>文字效果(<u>E</u>)...</DlgButton>
          </ButtonGroup>
          <ButtonGroup $gap={10}>
            <DlgButton $w={74} $primary>确定</DlgButton>
            <DlgButton $w={74}>取消</DlgButton>
          </ButtonGroup>
        </ButtonRow>
      </DialogBody>
    </Dialog>

    <Callout $x={353} $y={129} $w={35} $h={27} />
    <Callout $x={481} $y={414} $w={394} $h={84} />
    <Callout $x={1171} $y={452} $w={94} $h={30} />
    <Arrows width="1357" height="770" viewBox="0 0 1357 770">
      <defs>
        <linearGradient id="fadeUp" gradientUnits="userSpaceOnUse" x1="371" y1="155" x2="479" y2="412">
          <stop offset="0.8" stopColor="#fe0000" />
          <stop offset="1" stopColor="#fe0000" stopOpacity="0" />
        </linearGradient>
        <linearGradient id="fadeRight" gradientUnits="userSpaceOnUse" x1="1165" y1="482" x2="823" y2="634">
          <stop offset="0.85" stopColor="#fe0000" />
          <stop offset="1" stopColor="#fe0000" stopOpacity="0" />
        </linearGradient>
      </defs>
      <polygon points="371,155 383,166.5 379.5,168.7 479,412 374.9,170.7 371,172" fill="url(#fadeUp)" />
      <polygon points="1165,482 1152,494.4 1150.3,490.7 823,634 1148.7,487.1 1147,483.4" fill="url(#fadeRight)" />
    </Arrows>
    <Hint>勾选【隐藏】</Hint>
  </Shell>
);

export default App;
